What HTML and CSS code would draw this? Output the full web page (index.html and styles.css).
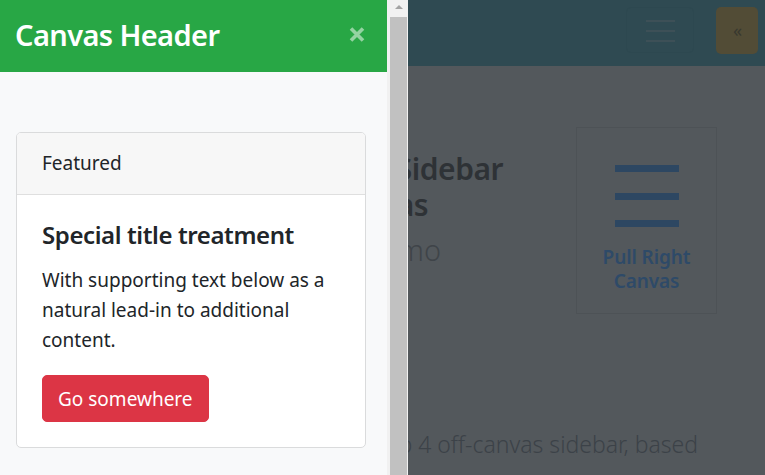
FILE: index.html
```html
<!DOCTYPE html>
<html lang="en">
<head>
<meta charset="utf-8">
<title>Off-canvas sidebar</title>
<link rel="stylesheet" href="styles.css">
</head>
<body>
<div class="page">
  <nav class="navbar">
    <button class="toggler" type="button"><span class="bars"><i></i><i></i><i></i></span></button>
    <button class="btn-warn" type="button">«</button>
  </nav>
  <main class="content">
    <div class="intro">
      <h2 class="title"><span class="t1">Bootstrap 4 Sidebar</span><span class="t2">Canvas</span></h2>
      <p class="sub">Demo</p>
    </div>
    <div class="pull-card">
      <svg class="pull-icon" width="64" height="62" viewBox="0 0 64 62"><rect x="0" y="0" width="64" height="7"/><rect x="0" y="28" width="64" height="7"/><rect x="0" y="55" width="64" height="7"/></svg>
      <div class="pull-text">Pull Right<br>Canvas</div>
    </div>
  </main>
  <p class="lead">A Bootstrap 4 off-canvas sidebar, based</p>
</div>

<aside class="offcanvas">
  <div class="oc-main">
    <header class="oc-header">
      <h4 class="oc-title">Canvas Header</h4>
      <svg class="oc-close" width="16" height="15" viewBox="0 0 16 15"><path d="M2 1.5L14 13.5M14 1.5L2 13.5"/></svg>
    </header>
    <div class="oc-body">
      <div class="card">
        <div class="card-header">Featured</div>
        <div class="card-body">
          <h5 class="card-title">Special title treatment</h5>
          <p class="card-text">With supporting text below as a natural lead-in to additional content.</p>
          <a class="btn-danger" href="#">Go somewhere</a>
        </div>
      </div>
    </div>
  </div>
  <div class="scrollbar">
    <div class="sb-arrow"><span class="sb-tri"></span></div>
    <div class="sb-thumb"></div>
  </div>
</aside>
</body>
</html>
```

FILE: styles.css
```css
* { box-sizing: border-box; }
html, body { margin: 0; padding: 0; }
body {
  font-family: "Noto Sans", "Open Sans", sans-serif;
  background: #53585c;
  width: 765px;
  height: 475px;
  overflow: hidden;
}

/* background page (dimmed) */
.page { width: 765px; }
.navbar {
  height: 66px;
  background: #2f4a52;
  display: flex;
  justify-content: flex-end;
  align-items: flex-start;
  padding: 7px 7px 0 0;
  gap: 22px;
}
.toggler {
  width: 68px;
  height: 46px;
  border: 1px solid #2d4850;
  border-radius: 5px;
  background: transparent;
  padding: 0;
  display: flex;
  justify-content: center;
  align-items: flex-start;
}
.bars {
  display: flex;
  flex-direction: column;
  gap: 8px;
  margin-top: 12px;
}
.bars i { display: block; width: 29px; height: 2px; background: #3d5057; }
.btn-warn {
  width: 42px;
  height: 47px;
  border: 0;
  border-radius: 5px;
  background: #524c36;
  color: #38382f;
  font-family: "Noto Sans", sans-serif;
  font-size: 18px;
  line-height: 1;
  padding: 0 0 2px 1px;
}

.content {
  display: flex;
  align-items: flex-start;
}
.intro {
  width: 560px;
  flex: none;
  padding-top: 85px;
}
.title {
  margin: 0;
  font-size: 30px;
  line-height: 36px;
  font-weight: 600;
  letter-spacing: -0.5px;
  color: #2e3236;
}
.title span { display: block; text-align: right; white-space: nowrap; }
.t1 { padding-right: 57px; }
.t2 { padding-right: 132px; }
.sub {
  margin: 9px 0 0;
  font-size: 29px;
  line-height: 36px;
  font-weight: 300;
  color: #3f4449;
  text-align: right;
  padding-right: 119px;
}
.pull-card {
  margin: 61px 0 0 16px;
  width: 141px;
  height: 187px;
  border: 1px solid #4d5256;
  display: flex;
  flex-direction: column;
  align-items: center;
  padding-top: 37px;
}
.pull-icon { display: block; fill: #2d4762; }
.pull-text {
  margin-top: 18px;
  font-size: 19px;
  line-height: 24px;
  font-weight: 600;
  letter-spacing: -0.1px;
  color: #2e4a68;
  text-align: center;
}
.lead {
  margin: 112px 0 0;
  font-size: 23px;
  line-height: 36px;
  font-weight: 300;
  color: #3c4248;
  text-align: right;
  padding-right: 67px;
  white-space: nowrap;
}

/* off-canvas panel */
.offcanvas {
  position: fixed;
  top: 0;
  left: 0;
  width: 408px;
  height: 475px;
  display: flex;
}
.oc-main {
  width: 387px;
  background: #f8f9fa;
  display: flex;
  flex-direction: column;
}
.oc-header {
  height: 72px;
  background: #28a745;
  display: flex;
  justify-content: space-between;
  align-items: center;
  padding: 0 22px 3px 15px;
}
.oc-title {
  margin: 0;
  color: #fff;
  font-size: 29px;
  line-height: 36px;
  font-weight: 600;
  letter-spacing: -0.6px;
}
.oc-close { display: block; }
.oc-close path { stroke: #fff; stroke-opacity: .5; stroke-width: 3.6; fill: none; }
.oc-body { padding: 60px 21px 0 16px; }
.card {
  background: #fff;
  border: 1px solid #dadbdc;
  border-radius: 5px;
  overflow: hidden;
  color: #212529;
}
.card-header {
  background: #f7f7f7;
  border-bottom: 1px solid #dfdfdf;
  padding: 15px 25px 16px;
  font-size: 19px;
  line-height: 30px;
}
.card-body { padding: 25px; }
.card-title {
  margin: 0 0 15px;
  font-size: 24px;
  line-height: 30px;
  font-weight: 600;
  letter-spacing: -0.4px;
}
.card-text {
  margin: 0 0 20px;
  font-size: 19px;
  line-height: 30px;
}
.btn-danger {
  display: inline-block;
  background: #dc3545;
  color: #fff;
  text-decoration: none;
  border: 1px solid #dc3545;
  border-radius: 5px;
  padding: 7.5px 15px;
  font-size: 19px;
  line-height: 30px;
  vertical-align: top;
}

.scrollbar {
  width: 21px;
  background: #f1f1f1;
  display: flex;
  flex-direction: column;
}
.sb-arrow {
  height: 17px;
  display: flex;
  justify-content: center;
  padding: 5px 0 0 2px;
}
.sb-tri {
  width: 0;
  height: 0;
  border-left: 4px solid transparent;
  border-right: 4px solid transparent;
  border-bottom: 4px solid #a3a3a3;
}
.sb-thumb {
  flex: 1;
  width: 17px;
  margin-left: 3px;
  background: #c1c1c1;
}
```
